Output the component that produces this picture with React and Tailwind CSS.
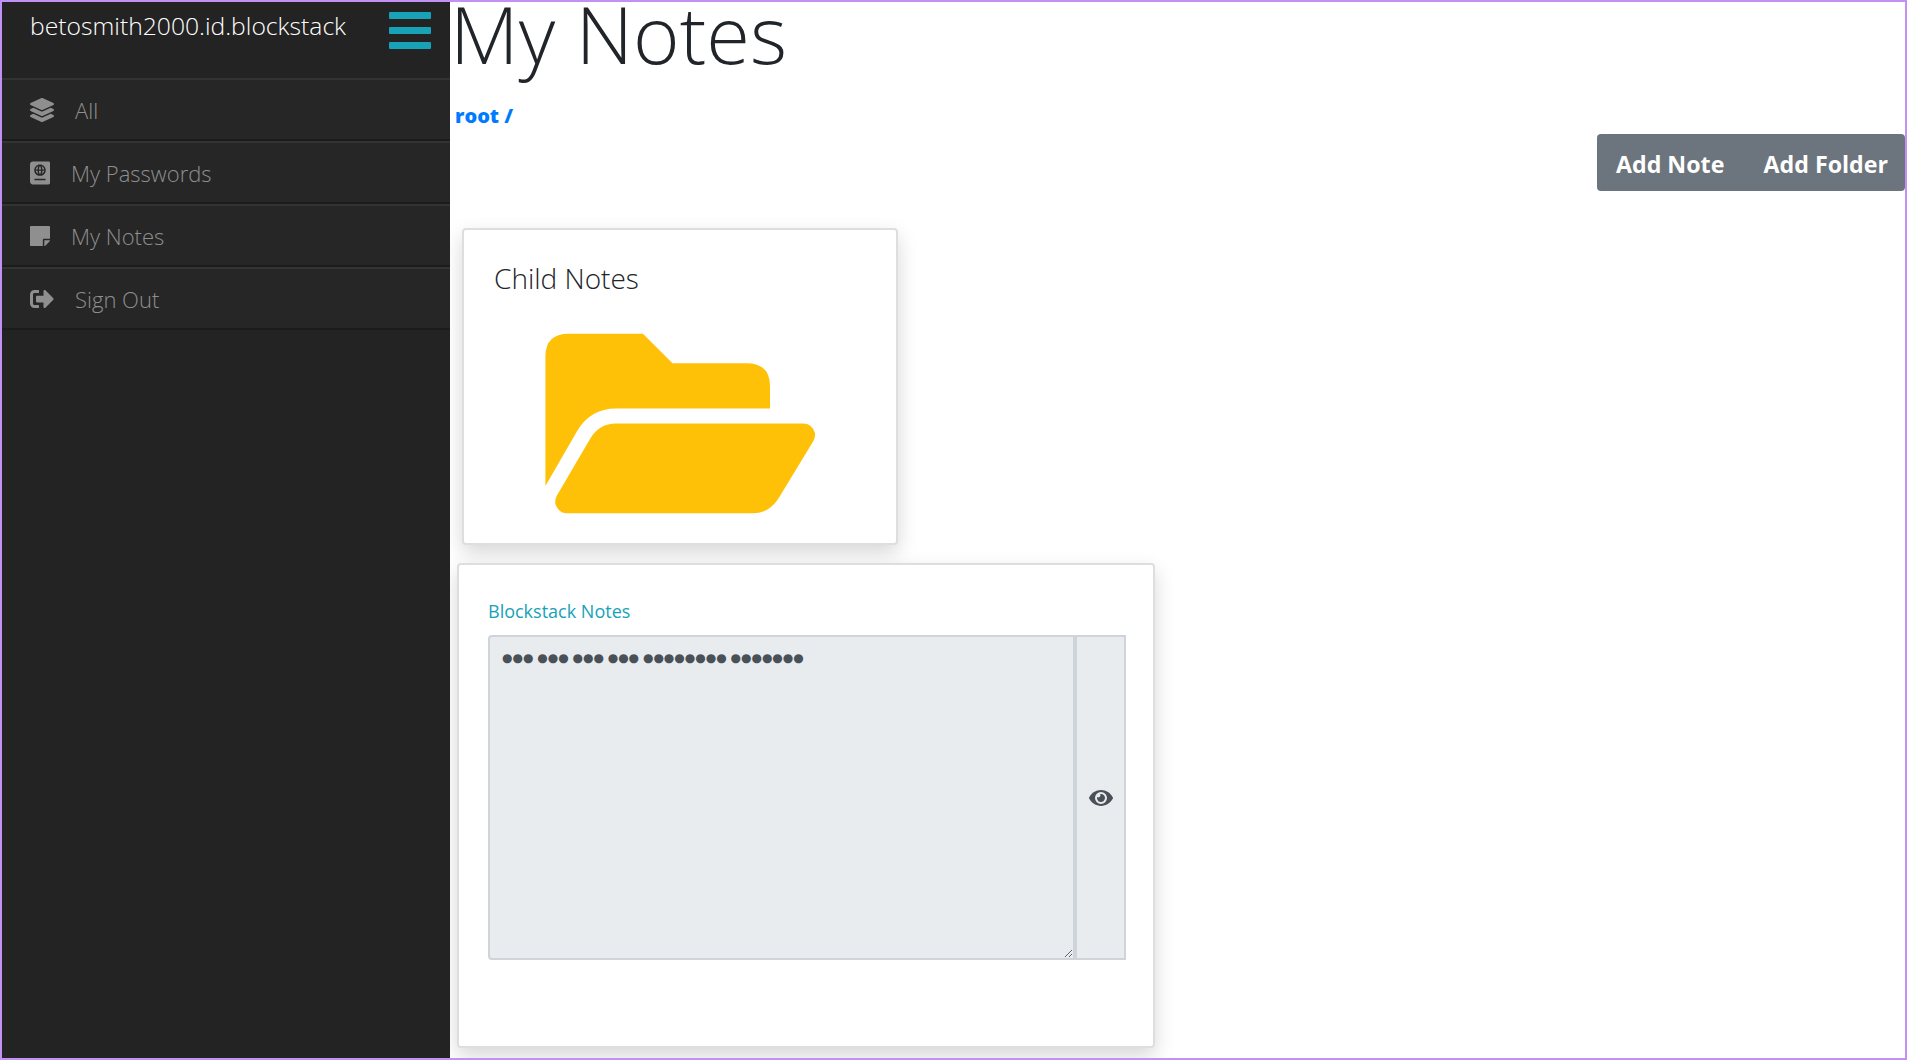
import { FaLayerGroup, FaPassport, FaStickyNote, FaSignOutAlt, FaEye } from 'react-icons/fa';

const menuItems = [
  { label: 'All', icon: FaLayerGroup, iconWidth: 'w-[24px]' },
  { label: 'My Passwords', icon: FaPassport, iconWidth: 'w-[20px]' },
  { label: 'My Notes', icon: FaStickyNote, iconWidth: 'w-[20px]' },
  { label: 'Sign Out', icon: FaSignOutAlt, iconWidth: 'w-[24px]' }
];

const FolderIcon = () => (
  <svg viewBox="285 100 812 544" className="block w-[271px] h-[181px]" fill="#ffc107">
    <path d="M285 560V170Q285 102 355 102H578L667 191H890Q960 191 960 260V327H497Q420 327 380 395Z" />
    <path d="M497 372H1060Q1085 372 1095 400Q1097 412 1090 425L990 590Q960 642 910 642H350Q325 642 315 615Q313 600 320 588L420 417Q447 372 497 372Z" />
  </svg>
);

const Sidebar = () => (
  <aside className="w-[448px] shrink-0 bg-[#232323]">
    <div className="h-[76px] flex items-start justify-between pl-[28px] pr-[19px]">
      <span className="text-[24.7px] font-light text-white mt-[7px] leading-[34px]">betosmith2000.id.blockstack</span>
      <button className="w-[42px] mt-[10px] flex flex-col gap-[8px]">
        <span className="block h-[7px] rounded-[1px] bg-[#17a2b8]" />
        <span className="block h-[7px] rounded-[1px] bg-[#17a2b8]" />
        <span className="block h-[7px] rounded-[1px] bg-[#17a2b8]" />
      </button>
    </div>
    {menuItems.map((item) => (
      <div
        key={item.label}
        className="h-[63px] flex items-center gap-[21px] pl-[28px] bg-[#262626] border-t-2 border-b-2 border-t-[#333333] border-b-[#1c1c1c] text-[#8f8f8f]"
      >
        <item.icon className={`h-[24px] ${item.iconWidth}`} />
        <span className="text-[22px] font-light leading-none">{item.label}</span>
      </div>
    ))}
  </aside>
);

const App = () => {
  return (
    <div className="h-[1060px] flex overflow-hidden border-2 border-[#c391f5] bg-white font-['Open_Sans',sans-serif]">
      <Sidebar />
      <main className="flex-1 min-w-0 overflow-hidden">
        <h1 className="text-[79.5px] font-light leading-[62px] text-[#212529] whitespace-nowrap">My Notes</h1>
        <a className="block mt-[37px] ml-[5px] text-[20px] leading-[30px] font-extrabold text-[#007bff]">root /</a>
        <div className="flex justify-end mt-[3px]">
          <div className="h-[57px] w-[308px] flex items-center justify-between pl-[19px] pr-[17px] pt-[3px] rounded-[4px] bg-[#6c757d] text-white text-[23.2px] font-bold">
            <span>Add Note</span>
            <span>Add Folder</span>
          </div>
        </div>
        <section className="w-[436px] h-[317px] ml-[12px] mt-[37px] border-2 border-[#dedede] rounded-[4px] bg-white shadow-[0_8px_20px_rgba(0,0,0,0.16)] pt-[31px] pl-[30px]">
          <h2 className="text-[28px] font-light leading-[34px] text-[#212529]">Child Notes</h2>
          <div className="mt-[38px] ml-[51px]"><FolderIcon /></div>
        </section>
        <section className="w-[698px] h-[485px] ml-[7px] mt-[18px] border-2 border-[#dedede] rounded-[4px] bg-white shadow-[0_8px_20px_rgba(0,0,0,0.16)] pt-[33px] px-[29px]">
          <label className="block text-[18px] leading-[27px] text-[#17a2b8]">Blockstack Notes</label>
          <div className="flex mt-[10px] h-[325px] w-[638px]">
            <textarea
              readOnly
              value="●●● ●●● ●●● ●●● ●●●●●●●● ●●●●●●●"
              className="flex-1 resize bg-[#e9ecef] border-2 border-[#ced4da] rounded-l-[4px] pt-[9px] pb-[8px] px-[12px] text-[12px] leading-[24px] text-[#495057] font-['DejaVu_Sans',sans-serif] outline-none"
            />
            <div className="w-[51px] flex items-center justify-center bg-[#e9ecef] border-2 border-[#ced4da] text-[#495057]">
              <FaEye className="text-[24px]" />
            </div>
          </div>
        </section>
      </main>
    </div>
  );
};

export default App;
